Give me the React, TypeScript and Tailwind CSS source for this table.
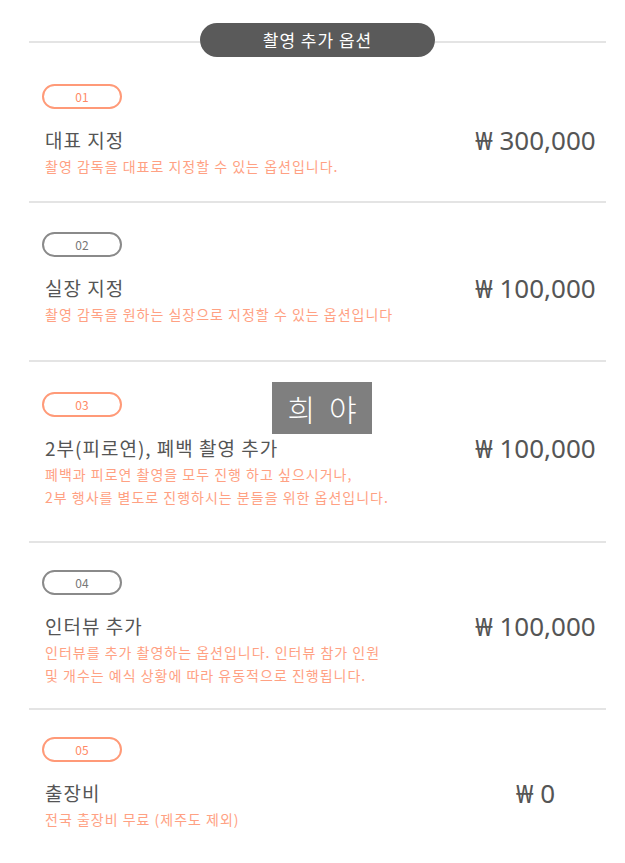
import React from "react";

type Option = {
  no: string;
  title: string;
  desc: string[];
  price: string;
  accent: boolean;
  pad: string;
};

// spacing varies a little per row in the original page
const options: Option[] = [
  {
    no: "01",
    title: "대표 지정",
    desc: ["촬영 감독을 대표로 지정할 수 있는 옵션입니다."],
    price: "₩ 300,000",
    accent: true,
    pad: "pt-[27px] pb-[23px]",
  },
  {
    no: "02",
    title: "실장 지정",
    desc: ["촬영 감독을 원하는 실장으로 지정할 수 있는 옵션입니다"],
    price: "₩ 100,000",
    accent: false,
    pad: "pt-[29px] pb-[34px]",
  },
  {
    no: "03",
    title: "2부(피로연), 폐백 촬영 추가",
    desc: [
      "폐백과 피로연 촬영을 모두 진행 하고 싶으시거나,",
      "2부 행사를 별도로 진행하시는 분들을 위한 옵션입니다.",
    ],
    price: "₩ 100,000",
    accent: true,
    pad: "pt-[30px] pb-[32px]",
  },
  {
    no: "04",
    title: "인터뷰 추가",
    desc: [
      "인터뷰를 추가 촬영하는 옵션입니다. 인터뷰 참가 인원",
      "및 개수는 예식 상황에 따라 유동적으로 진행됩니다.",
    ],
    price: "₩ 100,000",
    accent: false,
    pad: "pt-[27px] pb-[21px]",
  },
  {
    no: "05",
    title: "출장비",
    desc: ["전국 출장비 무료 (제주도 제외)"],
    price: "₩ 0",
    accent: true,
    pad: "pt-[27px] pb-[27px]",
  },
];

const OptionRow: React.FC<{ item: Option; last: boolean }> = ({ item, last }) => (
  <div className={`${item.pad} ${last ? "" : "border-b-2 border-[#e4e4e4]"}`}>
    <div
      className={`ml-[13px] flex h-[25px] w-[80px] items-center justify-center rounded-full border-2 text-[12px] ${
        item.accent
          ? "border-[#ff9a78] text-[#ff8a66]"
          : "border-[#8a8a8a] text-[#777]"
      }`}
    >
      {item.no}
    </div>
    <div className="mt-[19px] flex items-start">
      <div className="flex-1 pl-[16px]">
        <h3 className="text-[19px] leading-[24px] tracking-[1px] text-[#555]">
          {item.title}
        </h3>
        <div className="mt-[3px] text-[14px] leading-[23px] tracking-[1px] text-[#ffa183]">
          {item.desc.map((line) => (
            <p key={line}>{line}</p>
          ))}
        </div>
      </div>
      <div className="w-[140px] pr-[1px] text-center text-[26px] leading-[24px] text-[#555] font-['Noto_Sans','Noto_Sans_CJK_KR',sans-serif]">
        {item.price}
      </div>
    </div>
  </div>
);

export default function App() {
  return (
    <div className="relative min-h-[863px] w-[625px] bg-white pt-[23px] font-['Noto_Sans_CJK_KR','Noto_Sans',sans-serif]">
      <div className="mx-[29px] w-[577px]">
        <div className="flex items-center">
          <div className="mt-[4px] h-[2px] flex-1 bg-[#e4e4e4]" />
          <div className="flex h-[34px] w-[235px] items-center justify-center rounded-full bg-[#5a5a5a] text-[17px] tracking-[1px] text-white">
            촬영 추가 옵션
          </div>
          <div className="mt-[4px] h-[2px] flex-1 bg-[#e4e4e4]" />
        </div>

        {options.map((item, i) => (
          <OptionRow key={item.no} item={item} last={i === options.length - 1} />
        ))}
      </div>

      <div className="absolute left-[272px] top-[382px] flex h-[52px] w-[100px] items-center justify-center gap-[14px] bg-[#7f7f7f] text-[30px] font-light text-white">
        <span>희</span>
        <span>야</span>
      </div>
    </div>
  );
}
